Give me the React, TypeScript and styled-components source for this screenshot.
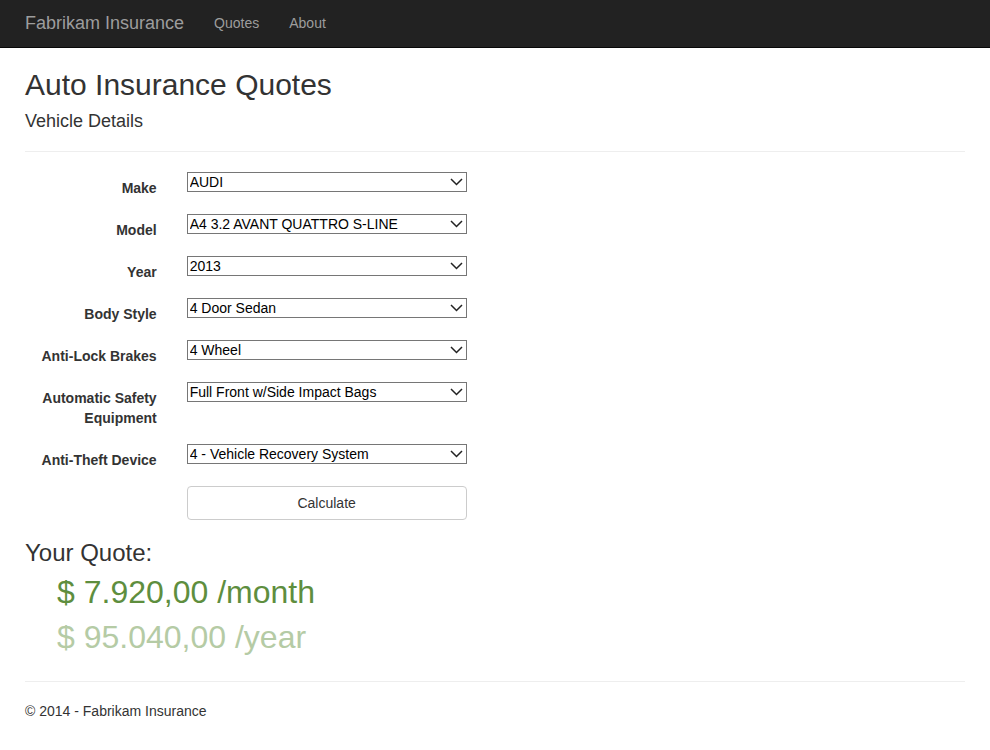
import * as React from "react";
import styled, { createGlobalStyle } from "styled-components";

const GlobalStyle = createGlobalStyle`
  body {
    margin: 0;
    font-family: "Liberation Sans", Arial, sans-serif;
    font-size: 14px;
    line-height: 1.428571;
    color: #333;
    background: #fff;
  }
`;

const chevron =
  "data:image/svg+xml;utf8," +
  encodeURIComponent(
    '<svg xmlns="http://www.w3.org/2000/svg" width="13" height="8" viewBox="0 0 13 8"><path d="M1 1l5.5 5.5L12 1" fill="none" stroke="#222" stroke-width="1.5"/></svg>'
  );

const Navbar = styled.nav`
  display: flex;
  align-items: center;
  height: 46px;
  padding: 0 10px 1px;
  background-color: #222;
  border-bottom: 1px solid #080808;
`;

const Brand = styled.a`
  padding: 0 15px;
  font-size: 18px;
  line-height: 20px;
  color: #9d9d9d;
  text-decoration: none;
`;

const NavLink = styled.a`
  padding: 0 15px;
  font-size: 14px;
  line-height: 20px;
  color: #9d9d9d;
  text-decoration: none;
`;

const Content = styled.main`
  padding: 0 25px;
`;

const Title = styled.h2`
  margin: 20px 0 10px;
  font-size: 30px;
  font-weight: 500;
  line-height: 1.1;
`;

const Subtitle = styled.h4`
  margin: 11px 0 9px;
  font-size: 18px;
  font-weight: 500;
  line-height: 1.1;
`;

const Rule = styled.hr<{ $gap?: number }>`
  margin: ${(p) => p.$gap ?? 20}px 0 20px;
  border: 0;
  border-top: 1px solid #eee;
`;

const Form = styled.form`
  margin-bottom: 15px;
`;

const FormGroup = styled.div`
  display: grid;
  grid-template-columns: 131.67px 280px;
  column-gap: 30px;
  align-items: start;
  margin-bottom: 15px;
`;

const Label = styled.label`
  padding: 6px 0 1px;
  font-weight: bold;
  text-align: right;
  line-height: 20px;
`;

const Select = styled.select`
  appearance: none;
  width: 280px;
  height: 20px;
  margin: 0;
  padding: 0 22px 0 2px;
  font-family: inherit;
  font-size: 14px;
  line-height: 18px;
  color: #000;
  background: #fff url("${chevron}") no-repeat right 3px center;
  border: 1px solid #767676;
  border-radius: 0;
`;

const Button = styled.button`
  grid-column: 2;
  width: 280px;
  height: 34px;
  padding: 6px 12px;
  font-family: inherit;
  font-size: 14px;
  color: #333;
  background: #fff;
  border: 1px solid #ccc;
  border-radius: 4px;
`;

const QuoteTitle = styled.h3`
  margin: 20px 0 4px;
  font-size: 24px;
  font-weight: 500;
  line-height: 1.1;
`;

const Price = styled.div<{ $faded?: boolean }>`
  margin-left: 32px;
  font-size: 32px;
  line-height: 45px;
  color: ${(p) => (p.$faded ? "#b5cba5" : "#5e8e3e")};
`;

const Footer = styled.footer`
  p {
    margin: 0 0 10px;
    line-height: 19px;
  }
`;

type Field = { label: string; value: string };

const fields: Field[] = [
  { label: "Make", value: "AUDI" },
  { label: "Model", value: "A4 3.2 AVANT QUATTRO S-LINE" },
  { label: "Year", value: "2013" },
  { label: "Body Style", value: "4 Door Sedan" },
  { label: "Anti-Lock Brakes", value: "4 Wheel" },
  { label: "Automatic Safety Equipment", value: "Full Front w/Side Impact Bags" },
  { label: "Anti-Theft Device", value: "4 - Vehicle Recovery System" },
];

export default function App() {
  return (
    <>
      <GlobalStyle />
      <Navbar>
        <Brand href="#">Fabrikam Insurance</Brand>
        <NavLink href="#">Quotes</NavLink>
        <NavLink href="#">About</NavLink>
      </Navbar>
      <Content>
        <Title>Auto Insurance Quotes</Title>
        <Subtitle>Vehicle Details</Subtitle>
        <Rule $gap={19} />
        <Form onSubmit={(e) => e.preventDefault()}>
          {fields.map((f) => (
            <FormGroup key={f.label}>
              <Label>{f.label}</Label>
              <Select defaultValue={f.value}>
                <option>{f.value}</option>
              </Select>
            </FormGroup>
          ))}
          <FormGroup>
            <Button type="submit">Calculate</Button>
          </FormGroup>
        </Form>
        <QuoteTitle>Your Quote:</QuoteTitle>
        <Price>$ 7.920,00 /month</Price>
        <Price $faded>$ 95.040,00 /year</Price>
        <Rule $gap={21} />
        <Footer>
          <p>© 2014 - Fabrikam Insurance</p>
        </Footer>
      </Content>
    </>
  );
}
